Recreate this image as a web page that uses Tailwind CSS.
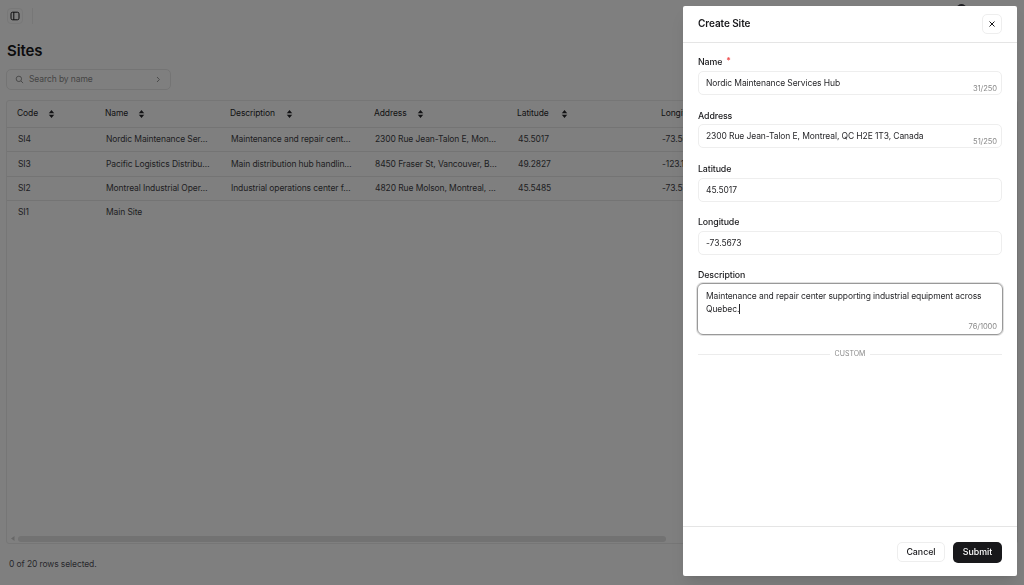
<!DOCTYPE html>
<html lang="en">
<head>
  <meta charset="UTF-8" />
  <title>Sites</title>
  <script src="https://cdn.jsdelivr.net/npm/@tailwindcss/browser@4"></script>
</head>
<body class="bg-white font-['Inter',sans-serif] text-[#18181b] overflow-hidden">
  <div class="relative w-[1024px] h-[585px] overflow-hidden">

    <!-- page behind the drawer -->
    <div class="flex flex-col h-full px-[6px]">
      <div class="flex items-center h-[32px]">
        <button class="flex items-center justify-center w-[16px] h-[16px] ml-[1px] rounded-[4px] border border-[#f0f0f0]">
          <svg width="10" height="10" viewBox="0 0 10 10" fill="none" stroke="#18181b" stroke-width="1"><rect x="1" y="1.2" width="8" height="7.6" rx="1.6"/><path d="M3.8 1.2v7.6"/></svg>
        </button>
        <div class="w-px h-[16px] bg-[#eeeeee] ml-[9px]"></div>
      </div>
      <h1 class="mt-[8.5px] h-[20px] leading-[20px] text-[15px] font-semibold pl-[1px] tracking-[-0.1px]">Sites</h1>
      <div class="mt-[8.5px] flex items-center w-[165px] h-[20.5px] border border-[#e8e8e8] rounded-[5px] pl-[8px] pr-[9px] text-[8.5px] tracking-[-0.1px] text-[#8a8a8a]">
        <svg width="9" height="9" viewBox="0 0 10 10" fill="none" stroke="#8a8a8a" stroke-width="1"><circle cx="4.3" cy="4.3" r="3"/><path d="M6.6 6.6 9 9"/></svg>
        <span class="ml-[5px] flex-1">Search by name</span>
        <svg width="6" height="7" viewBox="0 0 6 7" fill="none" stroke="#8a8a8a" stroke-width="0.9"><path d="M2 1l2.4 2.5L2 6"/></svg>
      </div>
      <div class="mt-[10px] h-[444px] w-[1012px] border border-[#ececec] rounded-[3px] overflow-hidden relative">
        <table class="table-fixed w-[1300px] border-collapse text-[8.5px] tracking-[-0.1px] text-left">
          <colgroup>
            <col class="w-[94px]" /><col class="w-[125px]" /><col class="w-[144px]" /><col class="w-[143px]" /><col class="w-[144px]" /><col />
          </colgroup>
          <thead class="text-[#27272a]">
            <tr class="h-[27px] border-b border-[#e8e8e8]">
              <th class="font-normal pl-[10px]"><span class="flex items-center gap-[10px]">Code <svg width="7" height="8" viewBox="0 0 7 8" fill="#27272a"><path d="M3.5 0 6 3H1zM1 5h5L3.5 8z"/><path d="M.8 3.7h5.4v.6H.8z"/></svg></span></th>
              <th class="font-normal pl-[4px]"><span class="flex items-center gap-[10px]">Name <svg width="7" height="8" viewBox="0 0 7 8" fill="#27272a"><path d="M3.5 0 6 3H1zM1 5h5L3.5 8z"/><path d="M.8 3.7h5.4v.6H.8z"/></svg></span></th>
              <th class="font-normal pl-[4px]"><span class="flex items-center gap-[11px]">Description <svg width="7" height="8" viewBox="0 0 7 8" fill="#27272a"><path d="M3.5 0 6 3H1zM1 5h5L3.5 8z"/><path d="M.8 3.7h5.4v.6H.8z"/></svg></span></th>
              <th class="font-normal pl-[4px]"><span class="flex items-center gap-[10px]">Address <svg width="7" height="8" viewBox="0 0 7 8" fill="#27272a"><path d="M3.5 0 6 3H1zM1 5h5L3.5 8z"/><path d="M.8 3.7h5.4v.6H.8z"/></svg></span></th>
              <th class="font-normal pl-[4px]"><span class="flex items-center gap-[12px]">Latitude <svg width="7" height="8" viewBox="0 0 7 8" fill="#27272a"><path d="M3.5 0 6 3H1zM1 5h5L3.5 8z"/><path d="M.8 3.7h5.4v.6H.8z"/></svg></span></th>
              <th class="font-normal pl-[4px]">Longitude</th>
            </tr>
          </thead>
          <tbody class="text-[#3f3f46]">
            <tr class="h-[24.3px] border-b border-[#e8e8e8]">
              <td class="pl-[11px]">SI4</td><td class="pl-[5px]">Nordic Maintenance Ser…</td><td class="pl-[5px]">Maintenance and repair cent…</td><td class="pl-[5px]">2300 Rue Jean-Talon E, Mon…</td><td class="pl-[5px]">45.5017</td><td class="pl-[5px]">-73.5673</td>
            </tr>
            <tr class="h-[24.3px] border-b border-[#e8e8e8]">
              <td class="pl-[11px]">SI3</td><td class="pl-[5px]">Pacific Logistics Distribu…</td><td class="pl-[5px]">Main distribution hub handlin…</td><td class="pl-[5px]">8450 Fraser St, Vancouver, B…</td><td class="pl-[5px]">49.2827</td><td class="pl-[5px]">-123.1207</td>
            </tr>
            <tr class="h-[24.3px] border-b border-[#e8e8e8]">
              <td class="pl-[11px]">SI2</td><td class="pl-[5px]">Montreal Industrial Oper…</td><td class="pl-[5px]">Industrial operations center f…</td><td class="pl-[5px]">4820 Rue Molson, Montreal, …</td><td class="pl-[5px]">45.5485</td><td class="pl-[5px]">-73.5737</td>
            </tr>
            <tr class="h-[24.3px]">
              <td class="pl-[11px]">SI1</td><td class="pl-[5px]">Main Site</td><td></td><td></td><td></td><td></td>
            </tr>
          </tbody>
        </table>
        <!-- scrollbar -->
        <svg class="absolute left-[4px] bottom-[2px]" width="4" height="5" viewBox="0 0 4 5" fill="#cfcfcf"><path d="M3.5 0v5L0 2.5z"/></svg>
        <div class="absolute left-[11px] bottom-[1px] w-[648px] h-[6px] rounded-full bg-[#e4e4e4]"></div>
      </div>
      <p class="mt-[14.5px] pl-[3px] text-[8.5px] tracking-[-0.1px] leading-[12px] text-[#52525b]">0 of 20 rows selected.</p>
    </div>

    <!-- avatar peeking above the drawer -->
    <div class="absolute left-[957px] top-[4px] w-[9px] h-[9px] rounded-full bg-[#3f3f46]"></div>

    <div class="absolute inset-0 bg-black/50 backdrop-blur-[0.6px]"></div>

    <!-- drawer -->
    <div class="absolute left-[683px] top-[6px] w-[334px] h-[570px] bg-white rounded-[2px] shadow-lg flex flex-col">
      <div class="flex items-center justify-between h-[37px] pl-[15px] pr-[15px] border-b border-[#e5e5e5] shrink-0">
        <h2 class="text-[10px] font-semibold -mt-[1px] tracking-[-0.08px]">Create Site</h2>
        <button class="flex items-center justify-center w-[20px] h-[20px] rounded-[5px] border border-[#eeeeee]">
          <svg width="8" height="8" viewBox="0 0 8 8" fill="none" stroke="#18181b" stroke-width="1"><path d="M1.5 1.5l5 5M6.5 1.5l-5 5"/></svg>
        </button>
      </div>

      <div class="flex-1 px-[15px] pt-[12px] flex flex-col gap-[13.25px] text-[8.5px] tracking-[-0.1px]">
        <div>
          <label class="flex h-[14px] mb-[2px] items-center text-[8.8px] font-medium">Name <span class="text-[#ef4444] ml-[4px] -mt-[3px]">*</span></label>
          <div class="relative h-[24px] border border-[#eeeeee] rounded-[5px] pl-[7px] flex items-center text-[#27272a]">
            Nordic Maintenance Services Hub
            <span class="absolute right-[4px] bottom-[-0.5px] text-[7.6px] text-[#8a8a8a]">31/250</span>
          </div>
        </div>
        <div>
          <label class="flex h-[14px] mb-[2px] items-center text-[8.8px] font-medium">Address</label>
          <div class="relative h-[24px] border border-[#eeeeee] rounded-[5px] pl-[7px] flex items-center text-[#27272a]">
            2300 Rue Jean-Talon E, Montreal, QC H2E 1T3, Canada
            <span class="absolute right-[4px] bottom-[-0.5px] text-[7.6px] text-[#8a8a8a]">51/250</span>
          </div>
        </div>
        <div>
          <label class="flex h-[14px] mb-[2px] items-center text-[8.8px] font-medium">Latitude</label>
          <div class="h-[24px] border border-[#eeeeee] rounded-[5px] pl-[7px] pt-[1px] flex items-center text-[#27272a]">45.5017</div>
        </div>
        <div>
          <label class="flex h-[14px] mb-[2px] items-center text-[8.8px] font-medium">Longitude</label>
          <div class="h-[24px] border border-[#eeeeee] rounded-[5px] pl-[7px] pt-[1px] flex items-center text-[#27272a]">-73.5673</div>
        </div>
        <div>
          <label class="flex h-[14px] mb-[1px] items-center text-[8.8px] font-medium">Description</label>
          <div class="relative h-[52px] -mx-[1px] border border-[#999999] ring-1 ring-[#e0e0e0] rounded-[6px] pl-[8px] pr-[8px] pt-[6px] leading-[12.5px] text-[#27272a]">
            Maintenance and repair center supporting industrial equipment across Quebec.<span class="inline-block w-px h-[10px] bg-[#27272a] align-middle"></span>
            <span class="absolute right-[5px] bottom-[1px] text-[7.6px] leading-[12px] text-[#8a8a8a]">76/1000</span>
          </div>
        </div>
        <div class="flex items-center gap-[5px] mt-[0.5px]">
          <div class="flex-1 h-px bg-[#ececec]"></div>
          <span class="text-[7px] tracking-normal text-[#8a8a8a]">CUSTOM</span>
          <div class="flex-1 h-px bg-[#ececec]"></div>
        </div>
      </div>

      <div class="h-[50px] shrink-0 border-t border-[#e5e5e5] flex items-center justify-end gap-[8px] pl-[15px] pr-[15px] pt-[1px]">
        <button class="w-[48px] h-[20px] rounded-[5px] border border-[#eeeeee] text-[8.8px] font-medium">Cancel</button>
        <button class="w-[49px] h-[21px] rounded-[5px] bg-[#18181b] text-white text-[8.8px] font-medium">Submit</button>
      </div>
    </div>
  </div>
</body>
</html>
